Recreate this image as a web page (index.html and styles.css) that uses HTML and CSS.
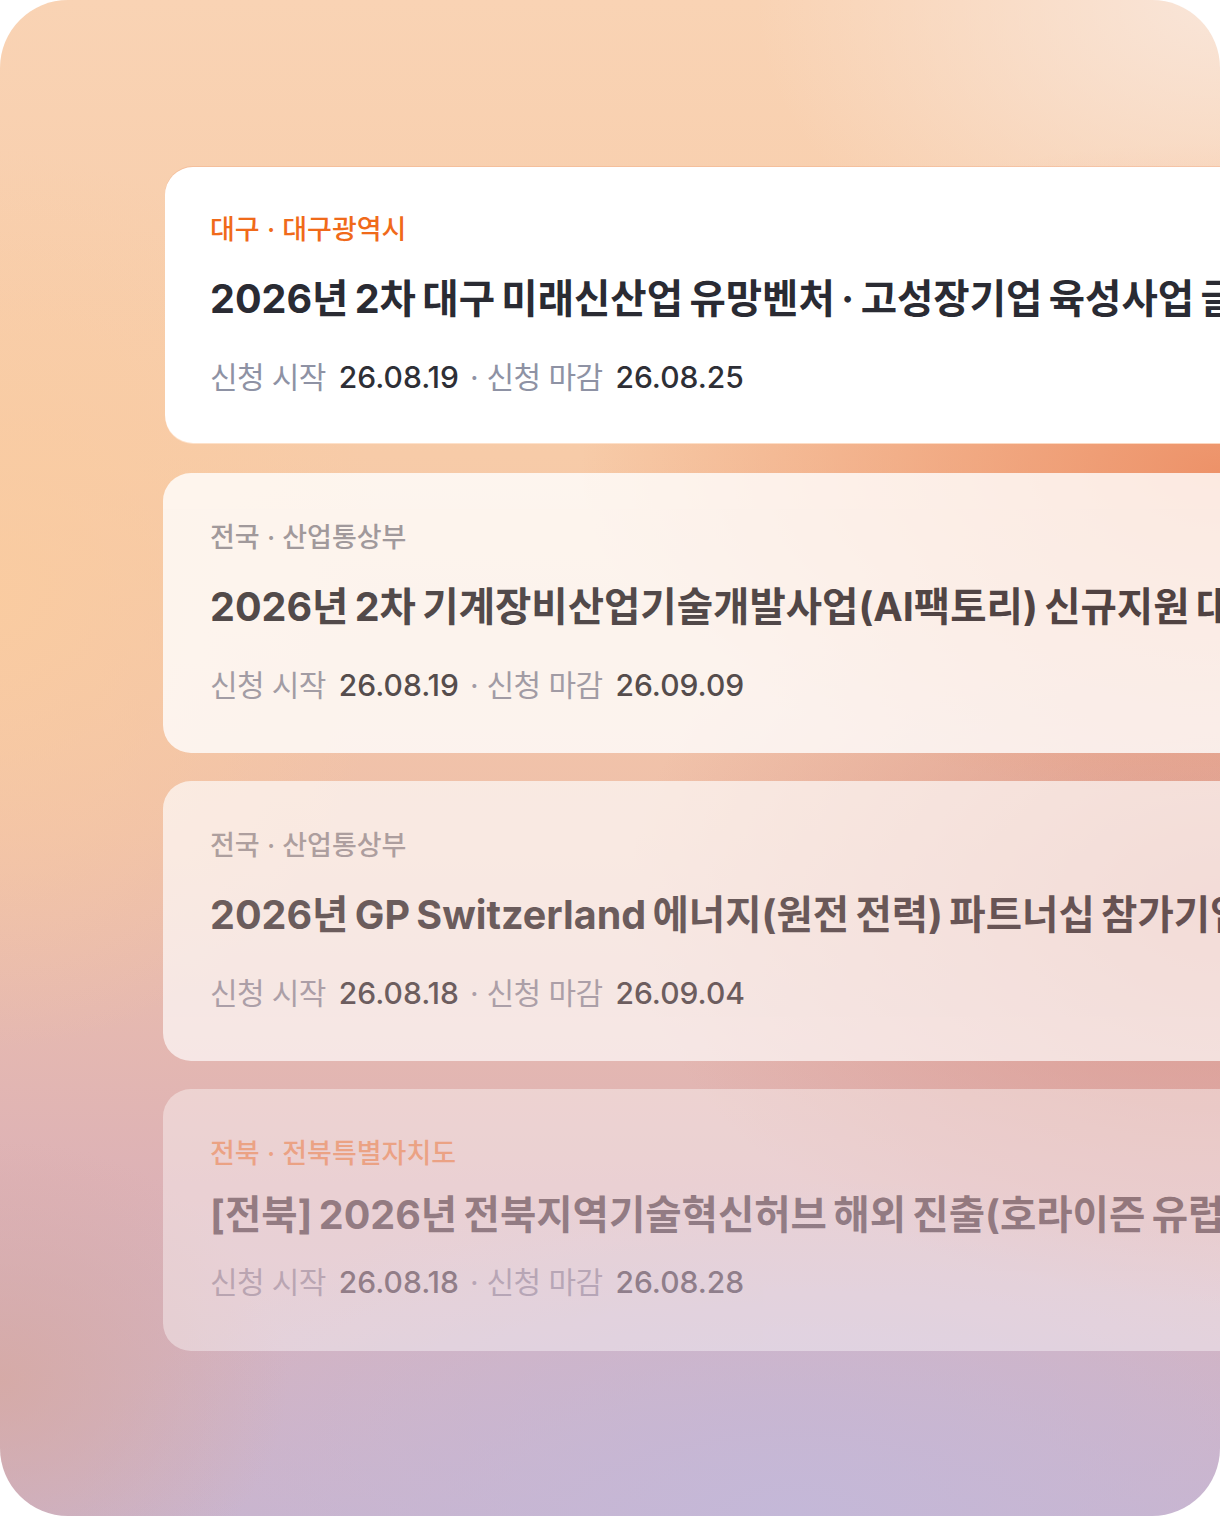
FILE: index.html
```html
<!DOCTYPE html>
<html lang="ko">
<head>
<meta charset="utf-8">
<title>지원사업 목록</title>
<link rel="stylesheet" href="styles.css">
</head>
<body>
<div class="frame">
  <div class="list">
    <article class="card card-1">
      <div class="cat cat-region">대구 · 대구광역시</div>
      <div class="title">2026년 2차 대구 미래신산업 유망벤처 · 고성장기업 육성사업 글로벌 진출 지원</div>
      <div class="dates"><span class="dl">신청 시작</span><span class="dv">26.08.19</span><span class="sep">·</span><span class="dl">신청 마감</span><span class="dv">26.08.25</span></div>
    </article>
    <article class="card card-2">
      <div class="cat cat-nation">전국 · 산업통상부</div>
      <div class="title">2026년 2차 기계장비산업기술개발사업(AI팩토리) 신규지원 대상과제 공고</div>
      <div class="dates"><span class="dl">신청 시작</span><span class="dv">26.08.19</span><span class="sep">·</span><span class="dl">신청 마감</span><span class="dv">26.09.09</span></div>
    </article>
    <article class="card card-3">
      <div class="cat cat-nation">전국 · 산업통상부</div>
      <div class="title">2026년 GP Switzerland 에너지(원전 전력) 파트너십 참가기업 모집</div>
      <div class="dates"><span class="dl">신청 시작</span><span class="dv">26.08.18</span><span class="sep">·</span><span class="dl">신청 마감</span><span class="dv">26.09.04</span></div>
    </article>
    <article class="card card-4">
      <div class="cat cat-region">전북 · 전북특별자치도</div>
      <div class="title">[전북] 2026년 전북지역기술혁신허브 해외 진출(호라이즌 유럽) 지원사업</div>
      <div class="dates"><span class="dl">신청 시작</span><span class="dv">26.08.18</span><span class="sep">·</span><span class="dl">신청 마감</span><span class="dv">26.08.28</span></div>
    </article>
  </div>
</div>
</body>
</html>
```
FILE: styles.css
```css
* { box-sizing: border-box; }
html, body { margin: 0; padding: 0; background: #ffffff; }
body {
  font-family: "Inter", "Noto Sans CJK KR", "Noto Sans", sans-serif;
}
.frame {
  width: 1220px;
  height: 1516px;
  border-radius: 68px;
  overflow: hidden;
  padding: 167px 0 0 163px;
  background:
    radial-gradient(ellipse 620px 420px at 100% 0%, rgba(249,230,218,0.95), rgba(249,230,218,0) 75%),
    radial-gradient(ellipse 820px 420px at 100% 470px, rgba(236,140,98,0.9), rgba(236,140,98,0) 78%),
    radial-gradient(ellipse 760px 520px at 100% 900px, rgba(214,140,130,0.75), rgba(214,140,130,0) 78%),
    radial-gradient(ellipse 520px 600px at 0% 600px, rgba(250,204,160,0.9), rgba(250,204,160,0) 75%),
    radial-gradient(ellipse 360px 300px at 0% 1380px, rgba(214,168,160,0.8), rgba(214,168,160,0) 80%),
    radial-gradient(ellipse 900px 420px at 65% 100%, rgba(196,184,216,1), rgba(196,184,216,0) 80%),
    linear-gradient(180deg, #F9D3B4 0%, #F7CBA8 30%, #EFC0AA 55%, #DDB2B6 78%, #CBB4CC 100%);
}
.list {
  display: flex;
  flex-direction: column;
}
.card {
  width: 1180px;
  background: #ffffff;
  border-radius: 28px;
  padding: 50px 0 50px 47px;
  white-space: nowrap;
}
.card-1 {
  margin-left: 2px;
  padding: 48px 0 48px 45px;
  box-shadow: 0 -1px 0 rgba(238,160,120,0.35), 0 1px 0 rgba(255,230,210,0.8);
}
.card-2 { margin-top: 30px; opacity: 0.8; }
.card-3 { margin-top: 28px; opacity: 0.66; }
.card-4 { margin-top: 28px; opacity: 0.4; padding-bottom: 51px; }

.cat {
  font-size: 27px;
  line-height: 30px;
  font-weight: 500;
}
.cat-region { color: #F06A1A; }
.cat-nation { color: #8C8E99; }
.card-4 .cat-region { color: #FF8A3D; }

.title {
  margin-top: 31px;
  font-size: 39.5px;
  line-height: 47px;
  font-weight: 700;
  color: #2A2B33;
  word-spacing: -3px;
}
.dates {
  margin-top: 36px;
  font-size: 30px;
  line-height: 36px;
  display: flex;
  align-items: baseline;
}
.card-4 .title { margin-top: 23px; }
.card-4 .dates { margin-top: 25px; }

.dl { color: #8E92A4; font-weight: 400; letter-spacing: -0.02em; }
.dv { color: #2E2F36; font-weight: 500; margin-left: 13px; }
.sep { color: #8E92A4; margin: 0 8px 0 11px; }
```
